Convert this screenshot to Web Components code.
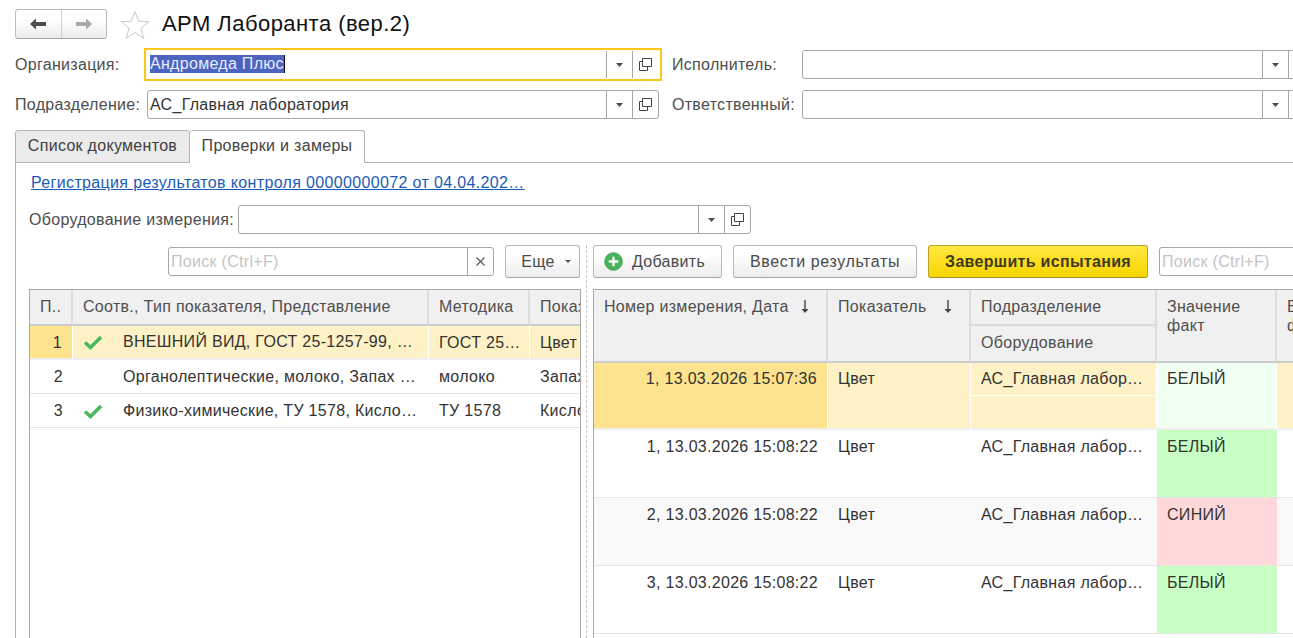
<!DOCTYPE html>
<html lang="ru"><head><meta charset="utf-8"><title>АРМ Лаборанта</title>
<style>
html,body{margin:0;padding:0;background:#fff}
body{font:16px "Liberation Sans",Arial,sans-serif;letter-spacing:.3px;color:#333}
</style></head><body>
<lab-app></lab-app>
<script>
const CHECK='<svg width="20" height="16" viewBox="0 0 20 16"><path d="M2 8.500l5.500 5L18 3" fill="none" stroke="#4bb85c" stroke-width="3.600"/></svg>';
const ARROW='<svg width="10" height="14" viewBox="0 0 10 14"><path d="M5 0v12" stroke="#444" stroke-width="1.400"/><path d="M1.500 9h7L5 13z" fill="#444"/></svg>';

class LabField extends HTMLElement{
  connectedCallback(){
    const w=this.getAttribute('width')||513, sel=this.hasAttribute('selected');
    const v=this.getAttribute('value')||'';
    this.attachShadow({mode:'open'}).innerHTML=`<style>
    :host{display:block;flex:none;position:relative;width:${w}px;height:29px;box-sizing:border-box;border:1px solid #a6a6a6;border-radius:3px;background:#fff}
    :host([selected]){border-color:transparent}
    :host([selected])::after{content:"";position:absolute;left:-4px;right:-4px;top:-3px;bottom:-3px;border:2.500px solid #fcc71b;pointer-events:none}
    .w{display:flex;height:100%;align-items:stretch}
    .t{flex:1;min-width:0;padding-left:2px;line-height:27px;color:#333;white-space:nowrap;overflow:hidden}
    .t b{font-weight:400;background:#4c64c0;color:#e8ecff;display:inline-block;line-height:18px;height:18px;border-right:1px solid #111;vertical-align:top;margin-top:4px}
    .b{flex:none;width:26px;box-sizing:border-box;display:flex;align-items:center;justify-content:center;border-left:1px solid #a6a6a6}
    </style><div class="w"><div class="t">${sel?`<b>${v}</b>`:v}</div>
    <div class="b"><svg width="7" height="4" viewBox="0 0 7 4"><path d="M0 0h7L3.500 4z" fill="#4d4d4d"/></svg></div>
    <div class="b"><svg width="13" height="13" viewBox="0 0 13 13" fill="none" stroke="#444"><path d="M3.500 .5h9v8h-9z"/><path d="M3.500 3.500h-3v9h8v-4"/></svg></div></div>`;
  }
}
class LabSearch extends HTMLElement{
  connectedCallback(){
    const clear=this.hasAttribute('clear');
    this.attachShadow({mode:'open'}).innerHTML=`<style>
    :host{display:block;flex:none;box-sizing:border-box;height:29px;border:1px solid #a6a6a6;border-radius:3px;background:#fff}
    .w{display:flex;height:100%}
    .t{flex:1;padding-left:2px;line-height:27px;color:#c4c4c4;white-space:nowrap;overflow:hidden}
    .x{flex:none;width:26px;box-sizing:border-box;border-left:1px solid #a6a6a6;display:flex;align-items:center;justify-content:center}
    </style><div class="w"><div class="t">Поиск (Ctrl+F)</div>${clear?`<div class="x"><svg width="9" height="9" viewBox="0 0 9 9"><path d="M.5.500l8 8M8.500.500l-8 8" stroke="#555" stroke-width="1.100"/></svg></div>`:''}</div>`;
  }
}
class LabButton extends HTMLElement{
  connectedCallback(){
    this.attachShadow({mode:'open'}).innerHTML=`<style>
    :host{display:flex;flex:none;align-items:center;justify-content:center;gap:8px;box-sizing:border-box;height:33px;border:1px solid #b9b9b9;border-bottom-color:#a3a3a3;border-radius:3px;background:linear-gradient(#fff 30%,#ececec);color:#4a4a4a;white-space:nowrap}
    :host([primary]){border-color:#b9a12e;border-bottom-color:#a8921f;background:linear-gradient(#ffe740,#f8d500);font-weight:700;color:#3f3a1a}
    </style><slot name="icon"></slot><slot></slot>`;
  }
}
class LabTabs extends HTMLElement{
  connectedCallback(){
    this.attachShadow({mode:'open'}).innerHTML=`<style>
    :host{display:flex;height:33px;box-sizing:border-box;border-bottom:1px solid #b3b3b3;margin-top:11px}
    .tab{box-sizing:border-box;width:175px;height:33px;border:1px solid #b3b3b3;border-radius:3px 3px 0 0;text-align:center;line-height:29px;white-space:nowrap;color:#3e3e3e}
    .a{background:#ebebeb;border-bottom-color:#b3b3b3}
    .b{background:#fff;border-left:0;border-bottom-color:#fff;color:#444}
    </style><div class="tab a">Список документов</div><div class="tab b">Проверки и замеры</div>`;
  }
}
class LabNav extends HTMLElement{
  connectedCallback(){
    this.attachShadow({mode:'open'}).innerHTML=`<style>
    :host{display:flex;align-items:center;height:30px}
    .n{display:flex;box-sizing:border-box;width:92px;height:30px;border:1px solid #bdbdbd;border-bottom-color:#a6a6a6;border-radius:3px;background:linear-gradient(#fff 30%,#ececec)}
    .n span{flex:1;display:flex;align-items:center;justify-content:center}
    .n span+span{border-left:1px solid #d0d0d0}
    .star{margin-left:13px;flex:none}
    h1{margin:0 0 0 12px;font-size:22px;letter-spacing:.45px;font-weight:400;color:#111;white-space:nowrap}
    </style>
    <div class="n"><span><svg width="18" height="12" viewBox="0 0 18 12"><path d="M1 6l6-5.500V4h10v4H7v3.500z" fill="#4d4d4d"/></svg></span>
    <span><svg width="18" height="12" viewBox="0 0 18 12"><path d="M17 6l-6-5.500V4H1v4h10v3.500z" fill="#a9a9a9"/></svg></span></div>
    <svg class="star" width="30" height="29" viewBox="0 0 30 29"><path d="M15 1.500l3.700 9.800 10.300.4-8.100 6.500 2.800 10-8.700-5.700-8.700 5.700 2.800-10L1 11.700l10.300-.4z" fill="#fff" stroke="#c9c9c9"/></svg>
    <h1><slot></slot></h1>`;
  }
}
class LeftTable extends HTMLElement{
  connectedCallback(){
    const rows=[['1',1,'ВНЕШНИЙ ВИД, ГОСТ 25-1257-99, …','ГОСТ 25…','Цвет'],['2',0,'Органолептические, молоко, Запах …','молоко','Запах'],['3',1,'Физико-химические, ТУ 1578, Кисло…','ТУ 1578','Кисло']];
    let h='';
    rows.forEach((r,i)=>{const s=i==0?' s':'';
      h+=`<div class="c n${s}${i==0?' k':''}">${r[0]}</div><div class="c m${s}"><i>${r[1]?CHECK:''}</i><span>${r[2]}</span></div><div class="c${s}">${r[3]}</div><div class="c${s} l">${r[4]}</div>`;});
    this.attachShadow({mode:'open'}).innerHTML=`<style>
    :host{display:block;box-sizing:border-box;height:349px;border:1px solid #a9a9a9;border-width:1px 1px 0 1px;overflow:hidden;background:#fff}
    .g{display:grid;grid-template-columns:43px 356px 101px 50px;grid-template-rows:36px 34px 34px 34px;white-space:nowrap}
    .h{background:#f0f0f0;border-right:2px solid #dcdcdc;border-bottom:2px solid #ccc;box-sizing:border-box;padding-left:10px;line-height:33px;color:#4f4f4f;overflow:hidden}
    .c{box-sizing:border-box;border-bottom:1px solid #e5e5e5;padding-left:10px;line-height:34px;color:#333;overflow:hidden}
    .n{text-align:right;padding:0 10px 0 0}
    .s{background:#fdf1c5;border-right:1px solid #fff;border-bottom:2px solid #eee}
    .k{background:#fde38d}
    .m{display:flex;align-items:center}
    .m i{flex:none;width:40px;display:flex;align-items:center}
    .m svg{display:block}
    .l{border-right:0}
    .g>.h:nth-child(4){border-right:0}
    </style><div class="g"><div class="h">П..</div><div class="h">Соотв., Тип показателя, Представление</div><div class="h">Методика</div><div class="h">Показ</div>${h}</div>`;
  }
}
class RightTable extends HTMLElement{
  connectedCallback(){
    const rows=[['1, 13.03.2026 15:07:36','БЕЛЫЙ','f'],['1, 13.03.2026 15:08:22','БЕЛЫЙ','v'],['2, 13.03.2026 15:08:22','СИНИЙ','r'],['3, 13.03.2026 15:08:22','БЕЛЫЙ','v']];
    let h='';
    rows.forEach((r,i)=>{const s=i==0?' s':(i==2?' alt':'');
      h+=`<div class="c d${s}${i==0?' k':''}">${r[0]}</div><div class="c${s}">Цвет</div><div class="c${s} two"><div>АС_Главная лабор…</div>${i==0?'<div class="sub"></div>':''}</div><div class="c ${r[2]}">${r[1]}</div><div class="c${s}"></div>`;});
    this.attachShadow({mode:'open'}).innerHTML=`<style>
    :host{display:block;box-sizing:border-box;width:760px;height:349px;border:1px solid #a9a9a9;border-width:1px 0 0 1px;overflow:hidden;background:#fff}
    .g{display:grid;grid-template-columns:234px 143px 186px 120px 60px;grid-template-rows:36px 37px 67px 68px 68px 68px;white-space:nowrap}
    .h{background:#f0f0f0;border-right:2px solid #dcdcdc;box-sizing:border-box;padding:0 10px;color:#4f4f4f;line-height:19px;overflow:hidden}
    .h0{grid-row:1/3;border-bottom:2px solid #ccc;padding-top:7px;display:flex;justify-content:space-between}
    .h0 svg{margin:3px 6px 0 0;flex:none}
    .h1{grid-column:3;grid-row:1;border-bottom:2px solid #d8d8d8;line-height:33px}
    .h2{grid-column:3;grid-row:2;border-bottom:2px solid #ccc;line-height:34px}
    .c{box-sizing:border-box;border-bottom:1px solid #e5e5e5;padding:7px 10px 0;line-height:19px;color:#333;overflow:hidden}
    .d{text-align:right}
    .alt{background:#f9f9f9}
    .s{background:#fdf1c5;border-right:1px solid #fff;border-bottom:2px solid #eee;padding-top:6px}
    .k{background:#fde38d}
    .f{background:#f0ffef;border-right:1px solid #fff;border-bottom:2px solid #eee;padding-top:6px}
    .v{background:#c8ffc4}
    .r{background:#ffd9d9}
    .two{position:relative}
    .sub{position:absolute;left:0;right:0;top:32px;border-top:1px solid #fff}
    </style><div class="g">
    <div class="h h0" style="grid-column:1"><span>Номер измерения, Дата</span>${ARROW}</div>
    <div class="h h0" style="grid-column:2"><span>Показатель</span>${ARROW}</div>
    <div class="h h1">Подразделение</div>
    <div class="h h2">Оборудование</div>
    <div class="h h0" style="grid-column:4"><span>Значение<br>факт</span></div>
    <div class="h h0" style="grid-column:5"><span>В<br>ф</span></div>
    ${h}</div>`;
  }
}
class LabApp extends HTMLElement{
  connectedCallback(){
    this.attachShadow({mode:'open'}).innerHTML=`<style>
    :host{display:block;box-sizing:border-box;width:1293px;height:638px;overflow:hidden;padding:9px 0 0 15px;background:#fff}
    .row{display:flex;align-items:center;height:29px;margin-top:11px;width:1400px}
    .lb{flex:none;color:#4d4d4d;white-space:nowrap}
    .panel{border-left:1px solid #b3b3b3;padding-left:13px;width:1400px}
    .link{height:42px;box-sizing:border-box;padding:0 0 2px 2px;display:flex;align-items:center}
    a{color:#1c5bb8;text-decoration:underline;white-space:nowrap;letter-spacing:.35px}
    .eq{margin-top:0}
    .split{display:flex;margin-top:11px}
    .left{flex:none;width:552px}
    .sp{flex:none;width:0;margin:0 6px 0 5px;height:393px;border-left:1px dashed #c8c8c8}
    .right{flex:none;width:760px}
    .bar{display:flex;align-items:center;height:33px;margin-bottom:11px;gap:11px}
    </style>
    <lab-nav>АРМ Лаборанта (вер.2)</lab-nav>
    <div class="row">
      <div class="lb" style="width:132px">Организация:</div><lab-field selected value="Андромеда Плюс" width="512"></lab-field>
      <div class="lb" style="width:130px;margin-left:13px">Исполнитель:</div><lab-field></lab-field>
    </div>
    <div class="row">
      <div class="lb" style="width:132px">Подразделение:</div><lab-field value="АС_Главная лаборатория" width="512"></lab-field>
      <div class="lb" style="width:130px;margin-left:13px">Ответственный:</div><lab-field></lab-field>
    </div>
    <lab-tabs></lab-tabs>
    <div class="panel">
      <div class="link"><a href="#">Регистрация результатов контроля 00000000072 от 04.04.202…</a></div>
      <div class="row eq"><div class="lb" style="width:209px">Оборудование измерения:</div><lab-field></lab-field></div>
      <div class="split">
        <div class="left">
          <div class="bar"><lab-search clear style="width:326px;margin-left:139px"></lab-search><lab-button style="width:75px;padding-left:7px">Еще <svg width="6" height="3" viewBox="0 0 6 3" style="margin-left:2px"><path d="M0 0h6L3 3z" fill="#555"/></svg></lab-button></div>
          <left-table></left-table>
        </div>
        <div class="sp"></div>
        <div class="right">
          <div class="bar">
            <lab-button style="width:129px;gap:9px;padding-right:6px"><svg slot="icon" width="19" height="19" viewBox="0 0 20 20"><circle cx="10" cy="10" r="9.300" fill="#46b45a" stroke="#3a9a4c" stroke-width=".8"/><path d="M10 5v10M5 10h10" stroke="#fff" stroke-width="2.400"/></svg>Добавить</lab-button>
            <lab-button style="width:184px;letter-spacing:.6px">Ввести результаты</lab-button>
            <lab-button primary style="width:220px">Завершить испытания</lab-button>
            <lab-search style="width:200px"></lab-search>
          </div>
          <right-table></right-table>
        </div>
      </div>
    </div>`;
  }
}
customElements.define('lab-field',LabField);
customElements.define('lab-search',LabSearch);
customElements.define('lab-button',LabButton);
customElements.define('lab-tabs',LabTabs);
customElements.define('lab-nav',LabNav);
customElements.define('left-table',LeftTable);
customElements.define('right-table',RightTable);
customElements.define('lab-app',LabApp);
</script>
</body></html>
